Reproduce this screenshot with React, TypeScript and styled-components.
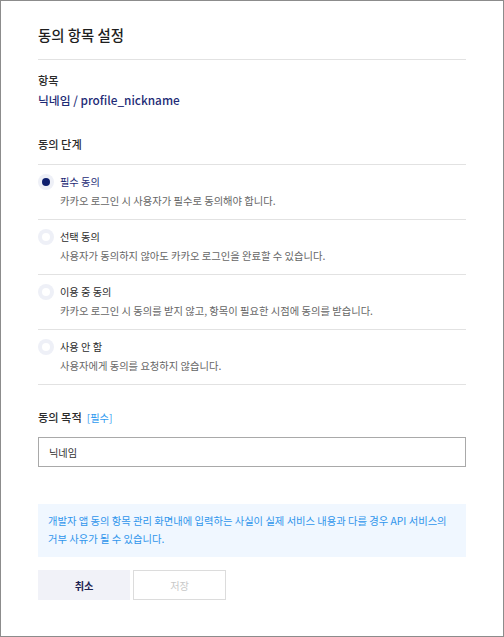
import React from "react";
import styled, { createGlobalStyle } from "styled-components";

const Global = createGlobalStyle`
  html, body { margin: 0; padding: 0; background: #fff; }
  * { box-sizing: border-box; }
  body { font-family: "Noto Sans CJK KR", "Noto Sans", sans-serif; }
`;

const Frame = styled.div`
  width: 504px;
  height: 637px;
  border: 1px solid #8c8c8c;
  padding: 0 37px;
  background: #fff;
  display: flex;
  flex-direction: column;
`;

const Header = styled.div`
  padding: 24px 0 14px;
  border-bottom: 1px solid #e2e2e2;
`;

const Title = styled.h1`
  margin: 0;
  font-size: 14.4px;
  line-height: 20px;
  font-weight: 500;
  color: #1e1e1e;
`;

const Label = styled.div<{ $mt?: number; $divider?: boolean }>`
  margin-top: ${(p) => p.$mt ?? 0}px;
  font-size: 11.2px;
  line-height: 17px;
  font-weight: 500;
  color: #2b2b2b;
  ${(p) => (p.$divider ? "padding-bottom: 11px; border-bottom: 1px solid #e2e2e2;" : "")}
`;

const Required = styled.span`
  margin-left: 5px;
  font-weight: 400;
  font-size: 10.2px;
  color: #2f9bf0;
`;

const Value = styled.div`
  margin-top: 2px;
  font-size: 11.8px;
  line-height: 18px;
  font-weight: 500;
  color: #1e2b76;
`;

const OptionList = styled.div`
  display: flex;
  flex-direction: column;
`;

const Option = styled.label`
  display: flex;
  gap: 6px;
  padding: 10px 0 11px;
  border-bottom: 1px solid #e2e2e2;
  cursor: pointer;
`;

const Radio = styled.span<{ $checked: boolean }>`
  flex: none;
  width: 16px;
  height: 16px;
  margin-top: -1px;
  border-radius: 50%;
  background: #eef0f7;
  display: flex;
  align-items: center;
  justify-content: center;
  &::after {
    content: "";
    width: 8px;
    height: 8px;
    border-radius: 50%;
    background: ${(p) => (p.$checked ? "#0e1f6e" : "#fff")};
  }
`;

const OptionText = styled.div`
  display: flex;
  flex-direction: column;
  gap: 5px;
`;

const OptionTitle = styled.span<{ $checked: boolean }>`
  font-size: 10.2px;
  line-height: 14px;
  color: ${(p) => (p.$checked ? "#1e2b76" : "#2b2b2b")};
`;

const OptionDesc = styled.span`
  font-size: 10.3px;
  line-height: 14px;
  color: #666;
`;

const Input = styled.input`
  margin-top: 11px;
  width: 100%;
  height: 30px;
  border: 1px solid #a9a9a9;
  border-radius: 0;
  padding: 0 10px;
  font-family: inherit;
  font-size: 10.2px;
  color: #333;
  outline: none;
`;

const Notice = styled.div`
  margin-top: 37px;
  padding: 8px 10px 9px;
  background: #f0f7ff;
  font-size: 10.3px;
  line-height: 18px;
  color: #2f95ec;
`;

const Buttons = styled.div`
  margin-top: 13px;
  display: flex;
  gap: 3px;
`;

const Button = styled.button<{ $variant: "cancel" | "save" }>`
  width: 92px;
  height: 30px;
  font-family: inherit;
  font-size: 10.2px;
  font-weight: ${(p) => (p.$variant === "cancel" ? 700 : 400)};
  border-radius: 0;
  cursor: pointer;
  ${(p) =>
    p.$variant === "cancel"
      ? "background: #f1f2f8; border: none; color: #1d2352;"
      : "background: #fff; border: 1px solid #dcdcdc; color: #c8c8c8; width: 93px;"}
`;

const options = [
  { title: "필수 동의", desc: "카카오 로그인 시 사용자가 필수로 동의해야 합니다." },
  { title: "선택 동의", desc: "사용자가 동의하지 않아도 카카오 로그인을 완료할 수 있습니다." },
  { title: "이용 중 동의", desc: "카카오 로그인 시 동의를 받지 않고, 항목이 필요한 시점에 동의를 받습니다." },
  { title: "사용 안 함", desc: "사용자에게 동의를 요청하지 않습니다." },
];

export default function App() {
  const [selected, setSelected] = React.useState(0);
  const [purpose, setPurpose] = React.useState("닉네임");
  return (
    <>
      <Global />
      <Frame>
        <Header>
          <Title>동의 항목 설정</Title>
        </Header>
        <Label $mt={12}>항목</Label>
        <Value>닉네임 / profile_nickname</Value>
        <Label $mt={27} $divider>
          동의 단계
        </Label>
        <OptionList>
          {options.map((o, i) => (
            <Option key={o.title} onClick={() => setSelected(i)}>
              <Radio $checked={selected === i} />
              <OptionText>
                <OptionTitle $checked={selected === i}>{o.title}</OptionTitle>
                <OptionDesc>{o.desc}</OptionDesc>
              </OptionText>
            </Option>
          ))}
        </OptionList>
        <Label $mt={24}>
          동의 목적<Required>[필수]</Required>
        </Label>
        <Input value={purpose} onChange={(e) => setPurpose(e.target.value)} />
        <Notice>
          개발자 앱 동의 항목 관리 화면내에 입력하는 사실이 실제 서비스 내용과 다를 경우 API 서비스의
          <br />
          거부 사유가 될 수 있습니다.
        </Notice>
        <Buttons>
          <Button $variant="cancel">취소</Button>
          <Button $variant="save">저장</Button>
        </Buttons>
      </Frame>
    </>
  );
}
